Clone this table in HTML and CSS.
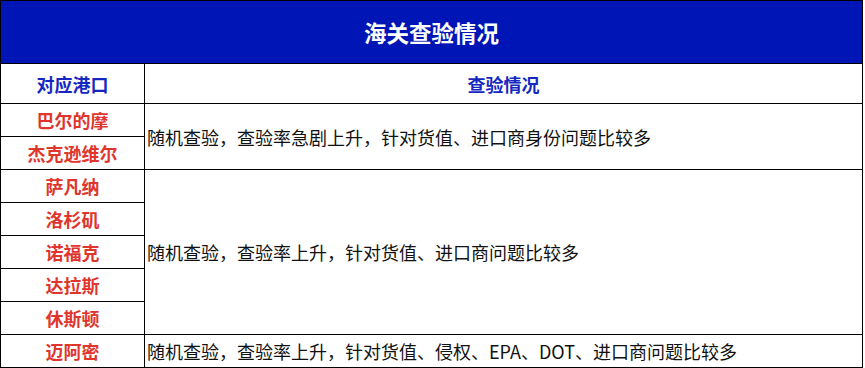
FILE: index.html
```html
<!DOCTYPE html>
<html lang="zh">
<head>
<meta charset="utf-8">
<title>海关查验情况</title>
<link rel="stylesheet" href="styles.css">
</head>
<body>
<table class="grid">
  <colgroup><col class="c-port"><col class="c-desc"></colgroup>
  <tr class="title"><td colspan="2">海关查验情况</td></tr>
  <tr class="head"><td>对应港口</td><td>查验情况</td></tr>
  <tr class="row"><td class="port">巴尔的摩</td><td class="desc" rowspan="2">随机查验，查验率急剧上升，针对货值、进口商身份问题比较多</td></tr>
  <tr class="row"><td class="port">杰克逊维尔</td></tr>
  <tr class="row"><td class="port">萨凡纳</td><td class="desc" rowspan="5">随机查验，查验率上升，针对货值、进口商问题比较多</td></tr>
  <tr class="row"><td class="port">洛杉矶</td></tr>
  <tr class="row"><td class="port">诺福克</td></tr>
  <tr class="row"><td class="port">达拉斯</td></tr>
  <tr class="row"><td class="port">休斯顿</td></tr>
  <tr class="row"><td class="port">迈阿密</td><td class="desc">随机查验，查验率上升，针对货值、侵权、EPA、DOT、进口商问题比较多</td></tr>
</table>
</body>
</html>
```
FILE: styles.css
```css
html, body {
  margin: 0;
  padding: 0;
  background: #ffffff;
}
body {
  font-family: "Noto Sans CJK SC", "Noto Sans", sans-serif;
}
.grid {
  border-collapse: collapse;
  table-layout: fixed;
  width: 863px;
}
.c-port { width: 144px; }
.grid td {
  border: 1px solid #000;
  padding: 0;
  line-height: 1;
}
.title td {
  height: 62px;
  background: #0015b5;
  color: #ffffff;
  font-size: 22.5px;
  font-weight: 700;
  text-align: center;
}
.head td {
  height: 39px;
  color: #1428c0;
  font-size: 18px;
  font-weight: 700;
  text-align: center;
}
.row td {
  height: 32px;
}
.port {
  color: #e0352d;
  font-size: 18px;
  font-weight: 700;
  text-align: center;
}
.desc {
  color: #111;
  font-size: 18px;
  padding-left: 2px !important;
  text-align: left;
}
```
